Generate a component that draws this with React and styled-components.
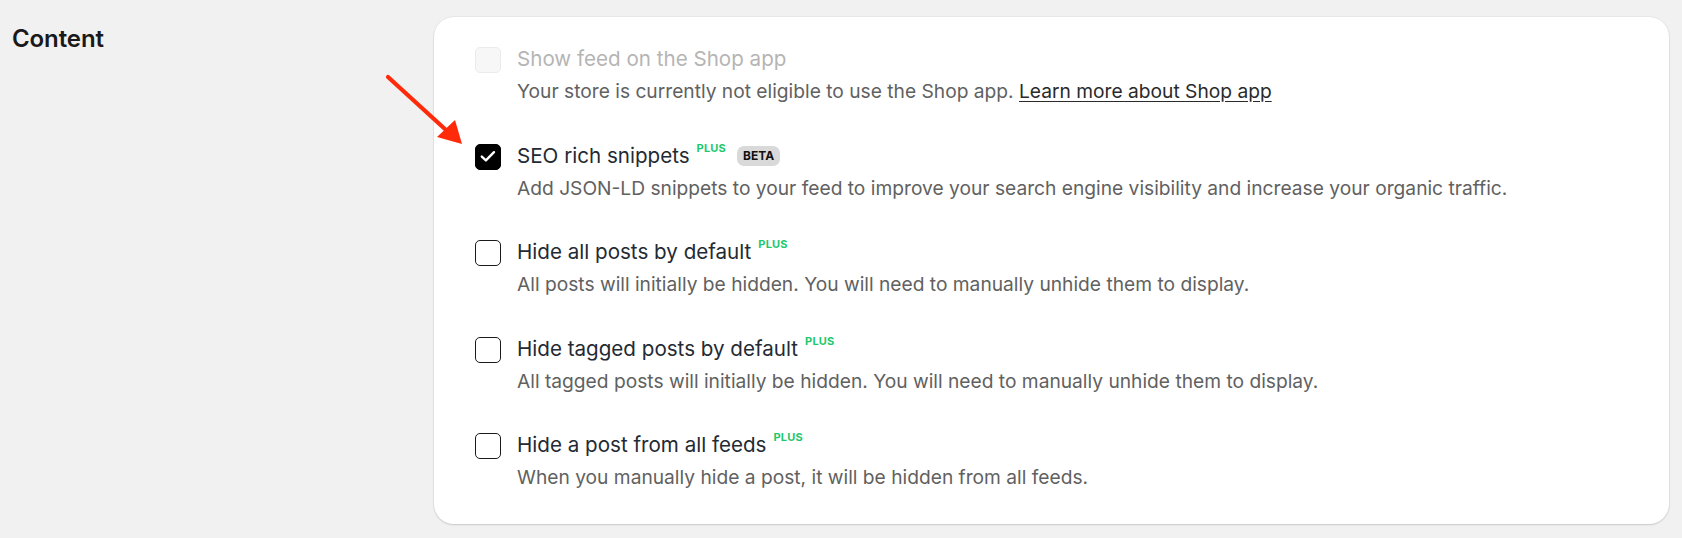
import styled, { createGlobalStyle } from "styled-components";

const GlobalStyle = createGlobalStyle`
    html, body {
        margin: 0;
        padding: 0;
        background: #f1f1f1;
        font-family: Inter, "Noto Sans", "Liberation Sans", sans-serif;
        -webkit-font-smoothing: antialiased;
    }
`;

const options = [
    {
        id: "shop",
        title: "Show feed on the Shop app",
        desc: "Your store is currently not eligible to use the Shop app.",
        link: "Learn more about Shop app",
        disabled: true,
    },
    {
        id: "seo",
        title: "SEO rich snippets",
        desc: "Add JSON-LD snippets to your feed to improve your search engine visibility and increase your organic traffic.",
        plus: true,
        beta: true,
        checked: true,
    },
    {
        id: "hideAll",
        title: "Hide all posts by default",
        desc: "All posts will initially be hidden. You will need to manually unhide them to display.",
        plus: true,
    },
    {
        id: "hideTagged",
        title: "Hide tagged posts by default",
        desc: "All tagged posts will initially be hidden. You will need to manually unhide them to display.",
        plus: true,
    },
    {
        id: "hideOne",
        title: "Hide a post from all feeds",
        desc: "When you manually hide a post, it will be hidden from all feeds.",
        plus: true,
    },
];

export default function App() {
    return (
        <Page>
            <GlobalStyle />
            <Section>
                <Heading>Content</Heading>
                <Card>
                    {options.map((item) => (
                        <Option key={item.id}>
                            <Box $checked={item.checked} $disabled={item.disabled}>
                                {item.checked && (
                                    <svg width="26" height="26" viewBox="0 0 26 26" fill="none">
                                        <path d="M6.8 13.6 L10.9 17.4 L19 9.2" stroke="#fff" strokeWidth="2.4" strokeLinecap="round" strokeLinejoin="round" />
                                    </svg>
                                )}
                            </Box>
                            <Texts>
                                <Title $disabled={item.disabled}>
                                    {item.title}
                                    {item.plus && <Plus>PLUS</Plus>}
                                    {item.beta && <Beta>BETA</Beta>}
                                </Title>
                                <Desc>
                                    {item.desc}
                                    {item.link && <> <Link href="#">{item.link}</Link></>}
                                </Desc>
                            </Texts>
                        </Option>
                    ))}
                </Card>
            </Section>
            <Arrow width="90" height="85" viewBox="0 0 90 85">
                <line x1="8" y1="9" x2="66" y2="62" stroke="#ff2a0a" strokeWidth="4.2" strokeLinecap="round" />
                <polygon points="82,76 57,69 75,52" fill="#ff2a0a" />
            </Arrow>
        </Page>
    );
}

const Page = styled.div`
    position: relative;
    padding: 17px 13px 14px 12px;
`;

const Section = styled.div`
    display: flex;
    align-items: flex-start;
`;

const Heading = styled.h2`
    flex: 0 0 422px;
    margin: 7px 0 0;
    font-size: 24px;
    line-height: 30px;
    font-weight: 600;
    color: #1a1a1a;
    letter-spacing: -0.1px;
`;

const Card = styled.div`
    flex: 1;
    background: #fff;
    border-radius: 20px;
    box-shadow: 0 1px 2px rgba(0, 0, 0, 0.14), 0 0 0 1px rgba(0, 0, 0, 0.035);
    padding: 28px 40px 34px 41px;
    display: flex;
    flex-direction: column;
    gap: 37.5px;
`;

const Option = styled.div`
    display: grid;
    grid-template-columns: 26px 1fr;
    column-gap: 16px;
`;

const Box = styled.span`
    box-sizing: border-box;
    width: 26px;
    height: 26px;
    margin-top: 2px;
    border-radius: 5px;
    display: flex;
    background: ${(p) => (p.$checked ? "#000" : p.$disabled ? "#f7f7f7" : "#fff")};
    border: 1.4px solid ${(p) => (p.$checked ? "#000" : p.$disabled ? "#ebebeb" : "#1a1a1a")};
    svg {
        margin: -1.4px;
    }
`;

const Texts = styled.div`
    display: flex;
    flex-direction: column;
    gap: 5px;
`;

const Title = styled.div`
    display: flex;
    align-items: flex-start;
    font-size: 20.6px;
    line-height: 28px;
    color: ${(p) => (p.$disabled ? "#b5b5b5" : "#242a33")};
`;

const Plus = styled.span`
    margin-left: 7px;
    font-size: 11px;
    line-height: 14px;
    font-weight: 700;
    color: #1ec86c;
    letter-spacing: 0.2px;
    margin-top: -1px;
`;

const Beta = styled.span`
    margin-left: 11px;
    margin-top: 4px;
    height: 20px;
    padding: 0 6px;
    border-radius: 7px;
    background: #d9d9d9;
    color: #111;
    font-size: 12px;
    font-weight: 700;
    line-height: 20px;
`;

const Desc = styled.div`
    font-size: 19.2px;
    line-height: 26px;
    color: #616161;
`;

const Link = styled.a`
    color: #2a2a2a;
    text-decoration: underline;
    text-underline-offset: 3px;
`;

const Arrow = styled.svg`
    position: absolute;
    left: 380px;
    top: 68px;
    pointer-events: none;
`;
